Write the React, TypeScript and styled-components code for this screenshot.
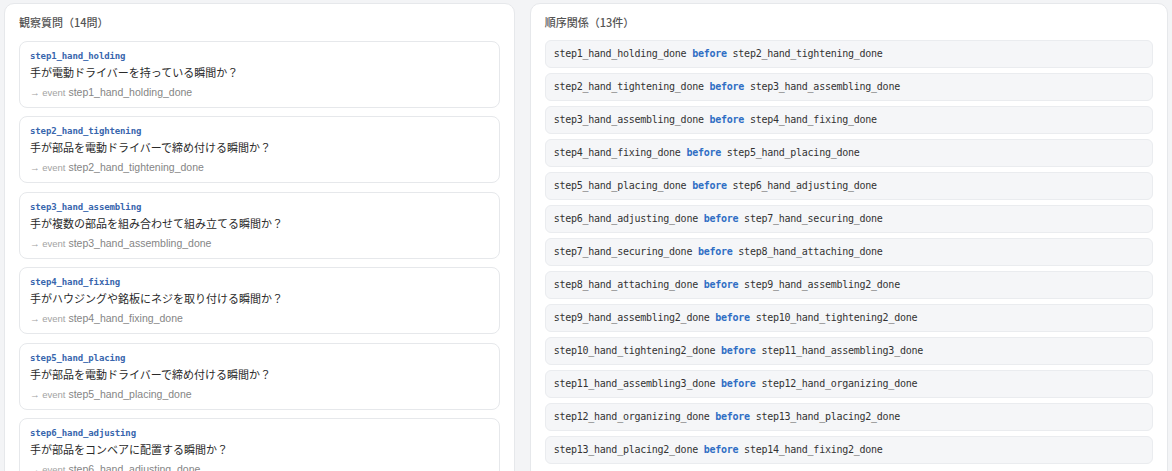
import React from 'react';
import styled, { createGlobalStyle } from 'styled-components';

interface Question {
  id: string;
  text: string;
  event: string;
}

interface Order {
  before: string;
  after: string;
}

const questions: Question[] = [
  { id: 'step1_hand_holding', text: '手が電動ドライバーを持っている瞬間か？', event: 'step1_hand_holding_done' },
  { id: 'step2_hand_tightening', text: '手が部品を電動ドライバーで締め付ける瞬間か？', event: 'step2_hand_tightening_done' },
  { id: 'step3_hand_assembling', text: '手が複数の部品を組み合わせて組み立てる瞬間か？', event: 'step3_hand_assembling_done' },
  { id: 'step4_hand_fixing', text: '手がハウジングや銘板にネジを取り付ける瞬間か？', event: 'step4_hand_fixing_done' },
  { id: 'step5_hand_placing', text: '手が部品を電動ドライバーで締め付ける瞬間か？', event: 'step5_hand_placing_done' },
  { id: 'step6_hand_adjusting', text: '手が部品をコンベアに配置する瞬間か？', event: 'step6_hand_adjusting_done' },
  { id: 'step7_hand_securing', text: '手が部品を固定する瞬間か？', event: 'step7_hand_securing_done' },
];

const steps = [
  'step1_hand_holding',
  'step2_hand_tightening',
  'step3_hand_assembling',
  'step4_hand_fixing',
  'step5_hand_placing',
  'step6_hand_adjusting',
  'step7_hand_securing',
  'step8_hand_attaching',
  'step9_hand_assembling2',
  'step10_hand_tightening2',
  'step11_hand_assembling3',
  'step12_hand_organizing',
  'step13_hand_placing2',
  'step14_hand_fixing2',
];

// each step must finish before the next one starts
const orders: Order[] = steps.slice(0, -1).map((s, i) => ({
  before: `${s}_done`,
  after: `${steps[i + 1]}_done`,
}));

const GlobalStyle = createGlobalStyle`
  html, body {
    margin: 0;
    height: 100%;
    overflow: hidden;
    background: #f3f4f6;
  }
  body {
    font-family: 'Liberation Sans', 'Noto Sans CJK JP', sans-serif;
    color: #333;
  }
`;

function App(): React.ReactElement {
  return (
    <>
      <GlobalStyle />
      <Page>
        <Panel>
          <PanelTitle>観察質問（14問）</PanelTitle>
          <CardList>
            {questions.map((q) => (
              <QuestionCard key={q.id}>
                <QuestionId>{q.id}</QuestionId>
                <QuestionText>{q.text}</QuestionText>
                <EventLine>
                  <EventLabel>→ event</EventLabel>
                  {q.event}
                </EventLine>
              </QuestionCard>
            ))}
          </CardList>
        </Panel>
        <Panel>
          <PanelTitle>順序関係（13件）</PanelTitle>
          <OrderList>
            {orders.map((o) => (
              <OrderRow key={o.before}>
                {o.before} <Keyword>before</Keyword> {o.after}
              </OrderRow>
            ))}
          </OrderList>
        </Panel>
      </Page>
    </>
  );
}

export default App;

const Page = styled.div`
  display: grid;
  grid-template-columns: 0.8fr 1fr;
  gap: 15px;
  padding: 3px 4px 0;
  align-items: start;
`;

const Panel = styled.section`
  background: #fff;
  border: 1px solid #e6e8eb;
  border-radius: 10px;
  padding: 9px 14px 15px;
  min-height: 600px;
`;

const PanelTitle = styled.h2`
  margin: 0 0 10px;
  font-family: 'Noto Sans CJK JP', sans-serif;
  font-size: 11px;
  line-height: 18px;
  font-weight: 500;
  color: #555;
`;

const CardList = styled.div`
  display: flex;
  flex-direction: column;
  gap: 8.4px;
`;

const QuestionCard = styled.div`
  border: 1px solid #e6e8eb;
  border-radius: 8px;
  padding: 8px 10px 7px;
  background: #fff;
`;

const QuestionId = styled.div`
  font-family: 'DejaVu Sans Mono', monospace;
  font-size: 9px;
  line-height: 13px;
  font-weight: 700;
  letter-spacing: -0.12px;
  color: #3866ad;
`;

const QuestionText = styled.div`
  font-family: 'Noto Sans CJK JP', sans-serif;
  font-size: 11px;
  line-height: 18px;
  color: #2a2a2a;
`;

const EventLine = styled.div`
  display: flex;
  align-items: baseline;
  height: 16px;
  margin-top: 3px;
  font-size: 10.5px;
  line-height: 16px;
  color: #858585;
`;

const EventLabel = styled.span`
  margin-right: 3px;
  font-size: 9.5px;
  color: #a3a3a3;
`;

const OrderList = styled.div`
  display: flex;
  flex-direction: column;
  gap: 5px;
  margin-top: -1px;
`;

const OrderRow = styled.div`
  background: #f5f6f8;
  border: 1px solid #eaecef;
  border-radius: 6px;
  padding: 7px 8px;
  font-family: 'DejaVu Sans Mono', monospace;
  font-size: 10px;
  line-height: 12px;
  letter-spacing: -0.25px;
  color: #333;
  white-space: nowrap;
`;

const Keyword = styled.span`
  font-weight: 700;
  color: #2f6ec4;
`;
